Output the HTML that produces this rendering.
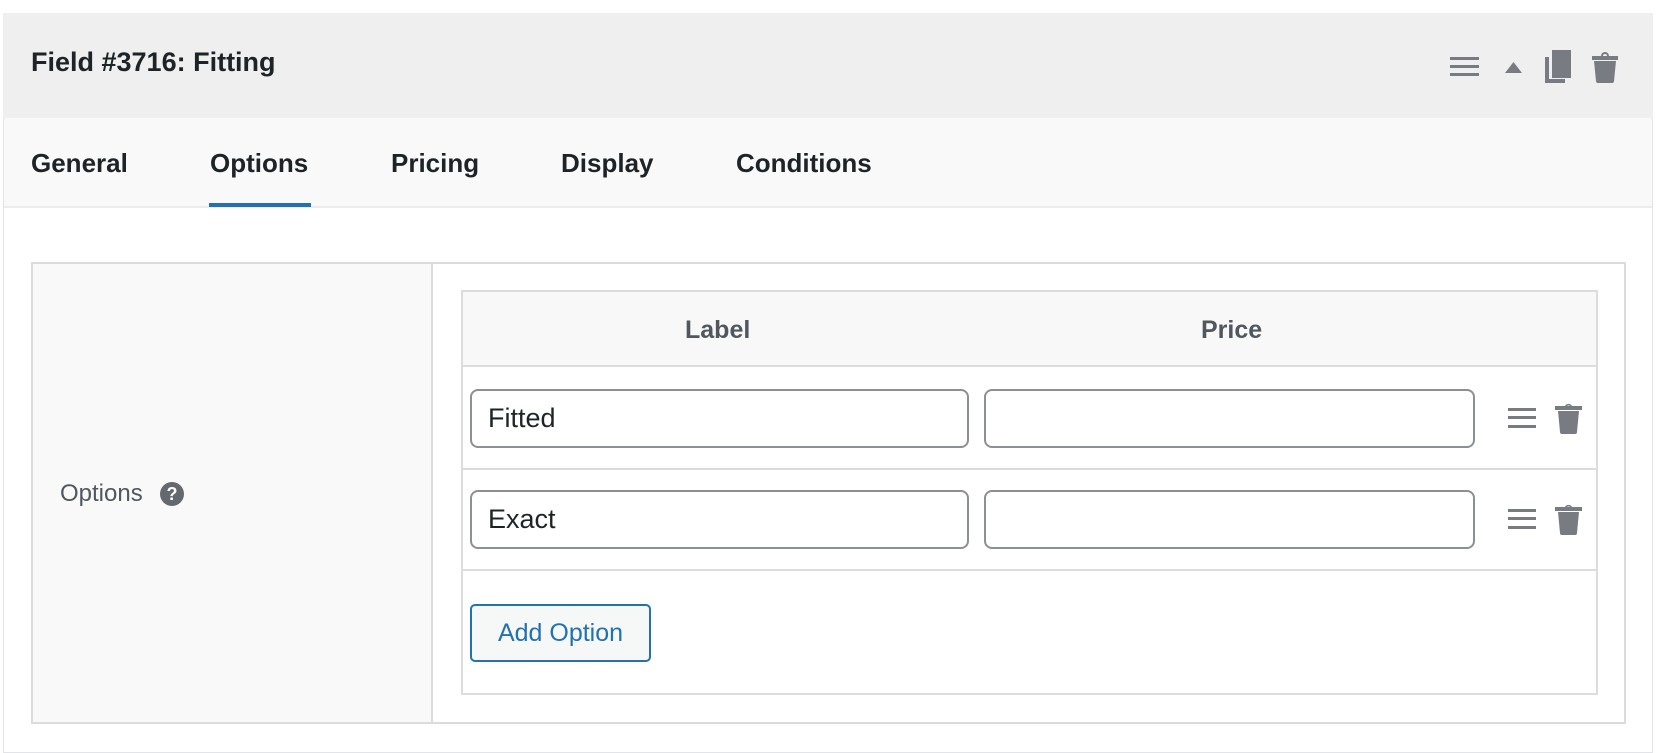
<!DOCTYPE html>
<html><head><meta charset="utf-8"><style>
*{box-sizing:border-box;margin:0;padding:0}
body{width:1666px;height:744px;background:#fff;position:relative;font-family:"Liberation Sans",Arial,sans-serif;overflow:hidden}
.a{position:absolute}
.panel{left:3px;top:13px;width:1650px;height:740px;border:1px solid #e2e4e7;border-top:none;background:#fff}
.hdr{left:3px;top:13px;width:1650px;height:105px;background:#efefef}
.tabs{left:4px;top:118px;width:1648px;height:90px;background:#f9f9f9;border-bottom:2px solid #ececec}
.t{top:148px;font-size:26px;font-weight:bold;color:#1d2327;line-height:30px}
.box{left:31px;top:262px;width:1595px;height:462px;border:2px solid #dcdcde;background:#fff}
.lc{left:33px;top:264px;width:400px;height:458px;background:#f9f9f9;border-right:2px solid #dcdcde}
.tbl{left:461px;top:290px;width:1137px;height:405px;border:2px solid #dcdcde;background:#fff}
.th{left:463px;top:292px;width:1133px;height:75px;background:#f8f8f8;border-bottom:2px solid #dcdcde}
.sep{left:463px;width:1133px;height:2px;background:#dcdcde}
.inp{height:59px;border:2px solid #8c8f94;border-radius:8px;background:#fff;font-size:27px;color:#1d2327;padding-left:16px;line-height:55px}
.hd{font-size:25px;font-weight:bold;color:#50575e;top:316px}
</style></head><body>
<div class="a panel"></div>
<div class="a hdr"></div>
<div class="a" style="left:31px;top:47px;font-size:27px;font-weight:bold;color:#1d2327">Field #3716: Fitting</div>
<svg class="a" style="left:1440px;top:40px" width="190" height="50" viewBox="1440 40 190 50">
<g fill="#787c82">
<rect x="1450" y="57" width="29" height="3"/><rect x="1450" y="65" width="29" height="3"/><rect x="1450" y="73" width="29" height="3"/>
<polygon points="1505,73 1522,73 1513.5,62"/>
<rect x="1552" y="50" width="19" height="28"/>
<path d="M1545 57h4v22h16v4h-20z"/>
<path d="M1592 56h26v4h-26z M1601 56a4 4 0 0 1 8 0h-2a2 2 0 0 0 -4 0z M1594 61h22l-2 20a2 2 0 0 1 -2 2h-14a2 2 0 0 1 -2 -2z"/>
</g></svg>
<div class="a tabs"></div>
<div class="a t" style="left:31px">General</div>
<div class="a t" style="left:210px">Options</div>
<div class="a" style="left:209px;top:203px;width:102px;height:4px;background:#2271b1"></div>
<div class="a t" style="left:391px">Pricing</div>
<div class="a t" style="left:561px">Display</div>
<div class="a t" style="left:736px">Conditions</div>
<div class="a box"></div>
<div class="a lc"></div>
<div class="a" style="left:60px;top:480px;font-size:24px;color:#50575e">Options</div>
<div class="a" style="left:160px;top:482px;width:24px;height:24px;border-radius:50%;background:#646970;color:#fff;font-size:18px;font-weight:bold;text-align:center;line-height:24px">?</div>
<div class="a tbl"></div>
<div class="a th"></div>
<div class="a hd" style="left:685px">Label</div>
<div class="a hd" style="left:1201px">Price</div>
<div class="a sep" style="top:468px"></div>
<div class="a sep" style="top:569px"></div>
<div class="a inp" style="left:470px;top:389px;width:499px">Fitted</div>
<div class="a inp" style="left:984px;top:389px;width:491px"></div>
<div class="a inp" style="left:470px;top:490px;width:499px">Exact</div>
<div class="a inp" style="left:984px;top:490px;width:491px"></div>
<svg class="a" style="left:1500px;top:395px" width="90" height="150" viewBox="1500 395 90 150">
<g fill="#787c82">
<rect x="1508" y="408" width="28" height="3"/><rect x="1508" y="416" width="28" height="3"/><rect x="1508" y="425" width="28" height="3"/>
<path d="M1555 406h27v4h-27z M1565 406a4 4 0 0 1 7 0h-2a2 2 0 0 0 -3 0z M1558 411h21l-2 21a2 2 0 0 1 -2 2h-13a2 2 0 0 1 -2 -2z"/>
<rect x="1508" y="509" width="28" height="3"/><rect x="1508" y="517" width="28" height="3"/><rect x="1508" y="526" width="28" height="3"/>
<path d="M1555 507h27v4h-27z M1565 507a4 4 0 0 1 7 0h-2a2 2 0 0 0 -3 0z M1558 512h21l-2 21a2 2 0 0 1 -2 2h-13a2 2 0 0 1 -2 -2z"/>
</g></svg>
<div class="a" style="left:470px;top:604px;width:181px;height:58px;border:2px solid #2271b1;border-radius:5px;background:#f6f7f7;color:#2271b1;font-size:25px;text-align:center;line-height:54px">Add Option</div>
</body></html>
